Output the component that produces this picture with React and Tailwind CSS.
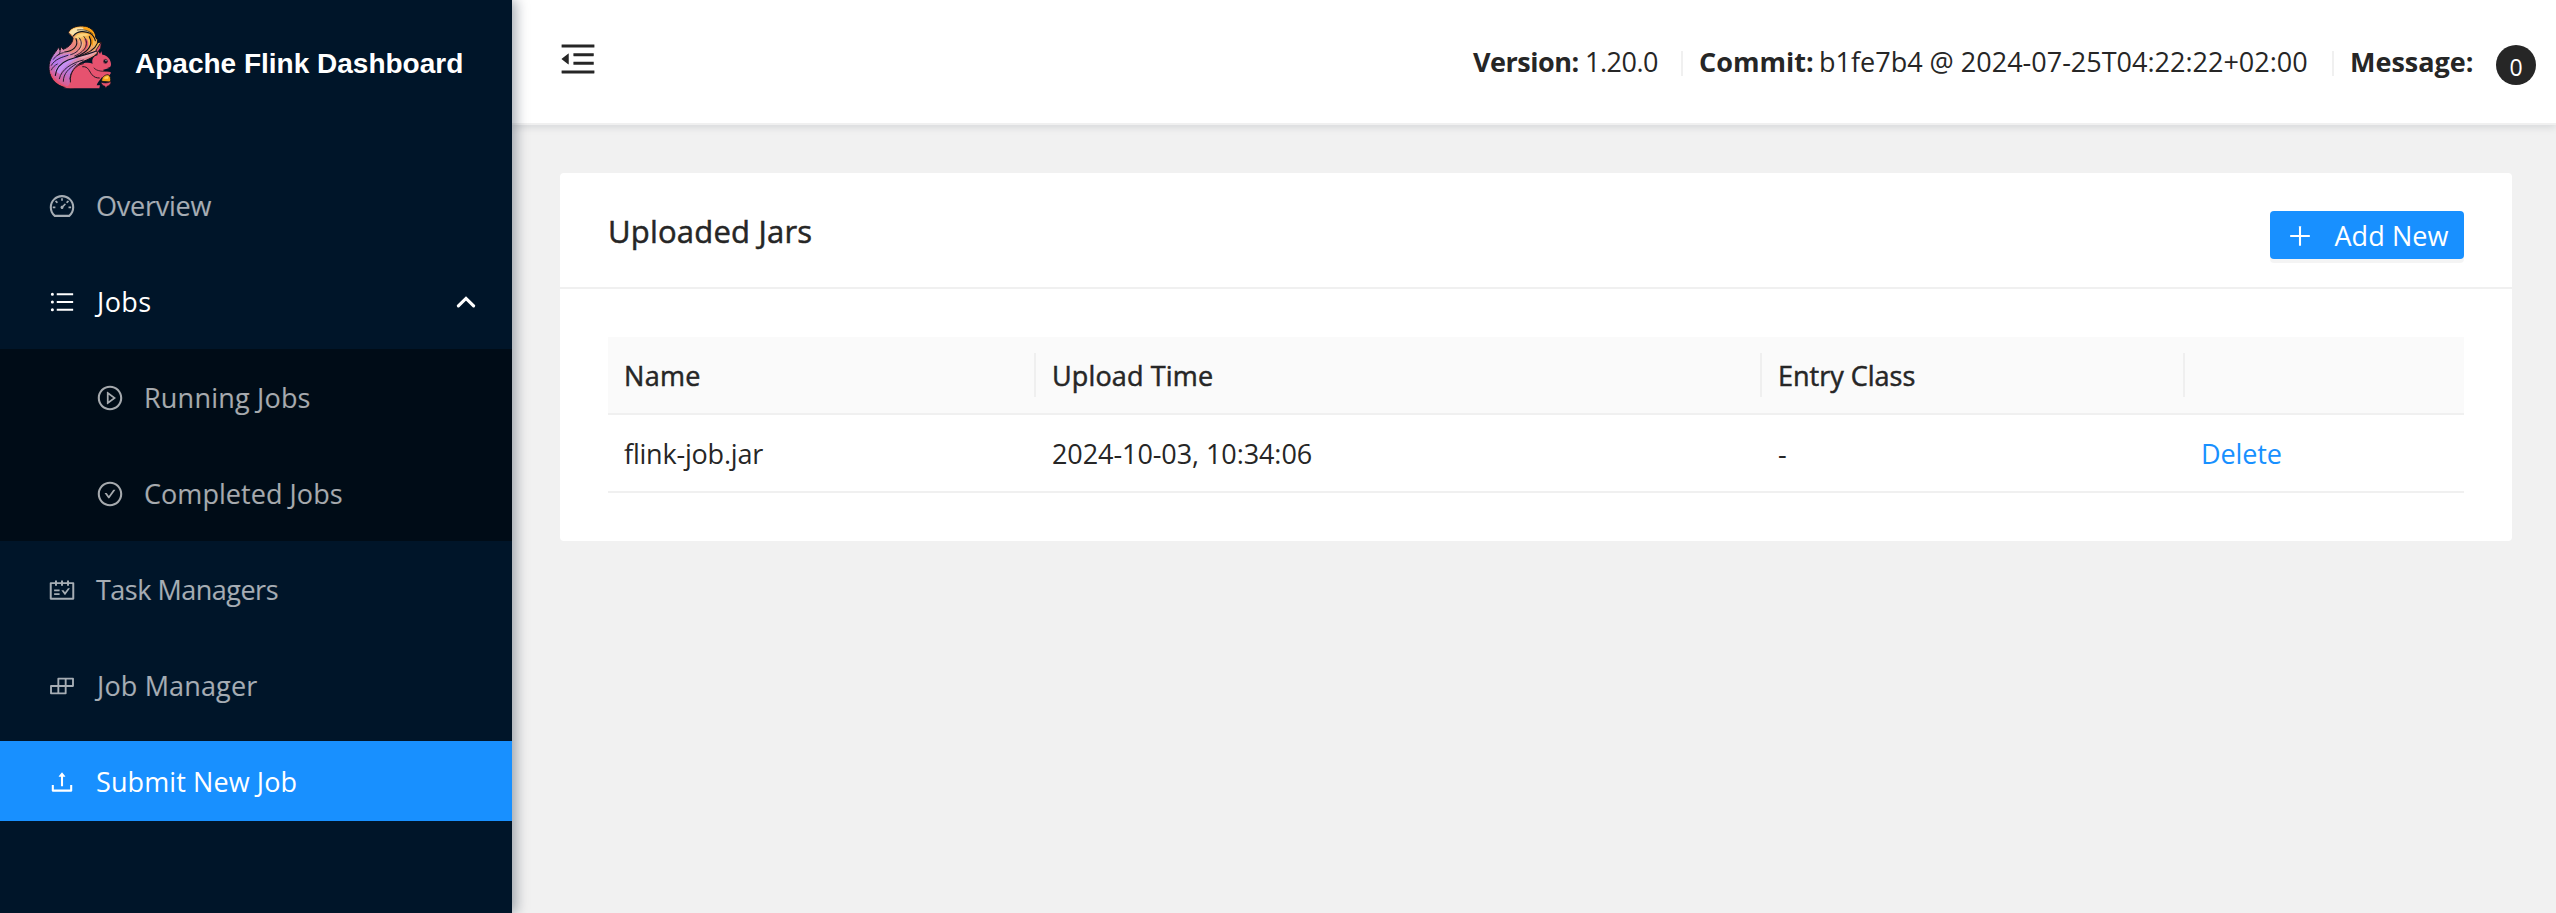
import React from "react";
import {
  AiOutlineDashboard,
  AiOutlineUnorderedList,
  AiOutlinePlayCircle,
  AiOutlineCheckCircle,
  AiOutlineSchedule,
  AiOutlineBuild,
  AiOutlineUpload,
  AiOutlineMenuFold,
  AiOutlinePlus,
} from "react-icons/ai";

function SquirrelLogo() {
  return (
    <svg viewBox="24 12 192 198" className="h-[66px] w-[64px]" aria-hidden="true">
      <defs>
        <linearGradient id="tail" x1="0.75" y1="0" x2="0.2" y2="1">
          <stop offset="0" stopColor="#f9a11b" />
          <stop offset="0.18" stopColor="#f8b95c" />
          <stop offset="0.36" stopColor="#ea7f7f" />
          <stop offset="0.52" stopColor="#d98bb0" />
          <stop offset="0.7" stopColor="#b77be6" />
          <stop offset="1" stopColor="#e6526f" />
        </linearGradient>
      </defs>
      {/* tail silhouette */}
      <path
        d="M100 205C56 205 27 178 27 142C27 116 42 104 56 82L60 90L64 80L69 88C82 84 98 72 99 55C98 48 90 46 85 38C90 24 108 17 128 18C150 19 168 34 167 52L173 60L172 68L184 66C180 78 172 84 178 88C174 104 158 112 140 120C112 130 92 150 90 176Z"
        fill="url(#tail)" stroke="#11131c" strokeWidth="3" strokeLinejoin="round"
      />
      {/* light upper tip */}
      <path d="M88 38C95 25 115 20 130 24C142 27 148 32 150 40C135 34 112 32 100 48C98 43 92 42 88 38Z" fill="#fbe3a8" />
      <path d="M130 21C150 21 163 34 164 50C156 42 150 34 130 28Z" fill="#fba112" />
      <path d="M104 52C116 38 138 38 150 46C142 46 126 48 116 58Z" fill="#fcd37a" />
      <path d="M152 44C160 52 160 66 158 78L150 70C152 60 150 52 146 48Z" fill="#f6930f" />
      {/* middle strands */}
      <path d="M72 94C96 88 108 72 108 56C120 62 118 84 98 98Z" fill="#e98a7c" />
      <path d="M122 60C136 72 128 90 112 98C124 88 124 74 116 64Z" fill="#f3b09a" />
      <path d="M140 56C150 70 144 86 130 94C138 80 138 68 132 58Z" fill="#e2556f" />
      <path d="M110 110C134 106 158 92 176 88C168 104 148 110 128 116Z" fill="#e9a3b2" />
      {/* purple strands */}
      <path d="M34 130C42 112 62 104 96 102C82 110 60 116 46 140Z" fill="#b679ea" />
      <path d="M44 152C56 128 82 116 118 112C92 124 72 138 60 162Z" fill="#c48ff0" />
      <path d="M30 150C36 168 50 186 78 198L98 203C56 204 32 180 30 150Z" fill="#e6526f" />
      <g fill="none" stroke="#11131c" strokeWidth="3.4" strokeLinecap="round">
        <path d="M100 48C112 32 134 32 150 40C160 46 164 54 166 62" />
        <path d="M112 30C130 27 148 32 158 42" strokeWidth="2" />
        <path d="M108 56C118 80 96 94 74 96" />
        <path d="M118 54C134 74 116 98 92 104" strokeWidth="2.6" />
        <path d="M132 50C150 72 134 96 104 108" strokeWidth="2.6" />
        <path d="M148 50C162 76 142 98 108 110" />
        <path d="M172 70C166 86 146 100 112 110" />
        <path d="M178 88C158 102 112 108 84 120C60 130 48 148 46 166" />
        <path d="M34 136C46 116 66 112 84 106" strokeWidth="2.6" />
        <path d="M40 118C48 106 60 100 70 98" strokeWidth="2.4" />
        <path d="M130 120C96 128 64 148 58 176" strokeWidth="2.6" />
        <path d="M108 132C86 146 70 160 70 184" strokeWidth="2.6" />
        <path d="M34 150C38 142 44 136 52 132" strokeWidth="2.4" />
        <path d="M60 88C62 98 58 102 54 106" strokeWidth="2.4" />
      </g>
      {/* body */}
      <path
        d="M66 204C80 204 92 196 91 176C91 152 106 134 130 130C140 128 150 128 158 131C154 120 160 108 172 106L175 94L180 102L184 94L187 104C202 104 213 120 213 132C213 142 206 146 198 147L188 150C194 156 206 152 213 158C208 170 194 176 186 172C180 180 172 188 170 196L180 196L178 205L88 205Z"
        fill="#e6526f"
      />
      <g fill="none" stroke="#11131c" strokeLinecap="round" strokeWidth="2.8">
        <path d="M91 186C88 156 108 134 130 131" />
        <path d="M128 140C146 138 148 156 156 164C162 172 170 174 178 174" />
        <path d="M162 144C170 154 190 156 210 152" strokeWidth="2.2" />
        <path d="M204 144L211 142" strokeWidth="2" />
      </g>
      <path d="M168 90L184 66L182 84L172 98Z" fill="#e6526f" stroke="#11131c" strokeWidth="2.4" />
      <ellipse cx="196" cy="124" rx="7" ry="8" fill="#8d3d55" />
      <circle cx="197" cy="124" r="5.5" fill="#11131c" />
      <circle cx="198" cy="122" r="1.8" fill="#dfe6ea" />
      {/* acorn */}
      <path d="M185 184C184 172 194 164 204 164C212 166 213 178 211 186Z" fill="#f7a21b" stroke="#11131c" strokeWidth="2.4" />
      <path d="M192 176C195 170 200 168 206 169L204 176Z" fill="#fcd25c" />
      <path d="M183 186C192 190 204 190 213 184C213 194 206 198 201 199L197 205L195 199C188 197 184 192 183 186Z" fill="#e6526f" stroke="#11131c" strokeWidth="2" />
    </svg>
  );
}

function NavItem({ icon: Icon, label, tracking = "", active = false, highlighted = false, nested = false, children }) {
  const tone = active || highlighted ? "text-white" : "text-white/65";
  return (
    <a
      className={`my-2 flex h-20 items-center pt-0.5 ${nested ? "pl-24" : "pl-12"} pr-9 ${tone} ${active ? "bg-[#1890ff]" : ""}`}
    >
      <Icon className="size-7 shrink-0" />
      <span className={`mb-px ml-5 leading-[39px] whitespace-nowrap ${tracking}`}>{label}</span>
      {children}
    </a>
  );
}

function Sidebar() {
  return (
    <aside className="relative z-10 flex w-[512px] shrink-0 flex-col bg-[#001529] shadow-[4px_0_12px_rgba(0,21,41,0.35)]">
      <div className="flex h-32 items-center pl-12">
        <div className="mb-[14px]">
          <SquirrelLogo />
        </div>
        <h1 className="ml-[23px] font-['Liberation_Sans',Arial,sans-serif] text-[28px] font-bold whitespace-nowrap text-white">
          Apache Flink Dashboard
        </h1>
      </div>
      <nav className="flex flex-col pt-[29px]">
        <NavItem icon={AiOutlineDashboard} label="Overview" tracking="tracking-[-0.25px]" />
        <NavItem icon={AiOutlineUnorderedList} label="Jobs" tracking="tracking-[0.4px] pl-px" highlighted>
          <svg viewBox="0 0 20 14" className="mr-0 mb-px ml-auto h-[14px] w-5" fill="none" stroke="currentColor" strokeWidth="3.2">
            <path d="M2.4 10.8L10 3.4L17.6 10.8" strokeLinecap="round" />
          </svg>
        </NavItem>
        <div className="flex flex-col bg-[#000c17] py-px">
          <div className="-my-px flex flex-col">
            <NavItem nested icon={AiOutlinePlayCircle} label="Running Jobs" tracking="tracking-[0.2px]" />
            <NavItem nested icon={AiOutlineCheckCircle} label="Completed Jobs" tracking="tracking-[0.05px]" />
          </div>
        </div>
        <NavItem icon={AiOutlineSchedule} label="Task Managers" tracking="tracking-[-0.5px]" />
        <NavItem icon={AiOutlineBuild} label="Job Manager" tracking="tracking-[0.15px] pl-px" />
        <NavItem icon={AiOutlineUpload} label="Submit New Job" tracking="tracking-[0.1px]" active />
      </nav>
    </aside>
  );
}

function Separator() {
  return <span className="mt-1 mr-4 h-[25px] w-0.5 bg-[#f0f0f0]" />;
}

function Header() {
  return (
    <header className="flex h-[125px] items-center border-b-2 border-[#f0f0f0] bg-white pr-5 pl-[45px] shadow-[0_2px_8px_rgba(0,21,41,0.12)]">
      <AiOutlineMenuFold className="mb-[5px] size-[42px]" />
      <div className="ml-auto flex items-center leading-10 whitespace-nowrap">
        <strong className="w-28 font-bold tracking-[-0.5px]">Version:</strong>
        <span className="w-24 tracking-[-0.5px]">1.20.0</span>
        <Separator />
        <strong className="w-[120px] font-bold">Commit:</strong>
        <span className="w-[513px]">b1fe7b4 @ 2024-07-25T04:22:22+02:00</span>
        <Separator />
        <strong className="w-[146px] font-bold">Message:</strong>
        <span className="mt-[7px] flex size-10 items-center justify-center rounded-full bg-[#262626] pt-[3px] text-[23px] text-white">
          0
        </span>
      </div>
    </header>
  );
}

const columns = [
  { title: "Name", tracking: "tracking-[0.3px]", divided: true },
  { title: "Upload Time", tracking: "tracking-[0.15px]", divided: true },
  { title: "Entry Class", tracking: "", divided: true },
  { title: "", tracking: "", divided: false },
];

function JarTable() {
  return (
    <div className="grid grid-cols-[428px_726px_423px_279px] leading-10">
      {columns.map((column, i) => (
        <div key={i} className="flex h-[78px] items-center border-b-2 border-[#f0f0f0] bg-[#fafafa] pl-4">
          <span className={`pt-px font-medium [-webkit-text-stroke:0.5px_#262626] ${column.tracking}`}>{column.title}</span>
          {column.divided && <span className="ml-auto h-11 w-0.5 bg-[#efefef]" />}
        </div>
      ))}
      <div className="flex h-[78px] items-center border-b-2 border-[#f0f0f0] pt-px pl-4 tracking-[-0.2px]">flink-job.jar</div>
      <div className="flex h-[78px] items-center border-b-2 border-[#f0f0f0] pt-px pl-4 tracking-[-0.08px]">2024-10-03, 10:34:06</div>
      <div className="flex h-[78px] items-center border-b-2 border-[#f0f0f0] pt-px pl-4">-</div>
      <div className="flex h-[78px] items-center border-b-2 border-[#f0f0f0] pt-px pl-4 tracking-[-0.1px] text-[#1890ff]">Delete</div>
    </div>
  );
}

export default function App() {
  return (
    <div className="flex h-screen overflow-hidden bg-[#f1f1f1] font-['Open_Sans','Noto_Sans',sans-serif] text-[27px] text-[#262626]">
      <Sidebar />
      <div className="flex min-w-0 flex-1 flex-col">
        <Header />
        <main className="px-12 pt-12 pr-11">
          <section className="rounded-[4px] bg-white">
            <div className="flex h-[116px] items-center justify-between border-b-2 border-[#f0f0f0] px-12 pt-0.5">
              <h2 className="text-[31px] leading-[42px] font-medium tracking-[0.2px] [-webkit-text-stroke:0.5px_#262626]">Uploaded Jars</h2>
              <button className="mt-2 flex h-12 items-center rounded-[4px] bg-[#1890ff] pr-[15px] pl-4 text-white shadow-[0_4px_0_rgba(0,0,0,0.045)]">
                <AiOutlinePlus className="mt-0.5 size-7" />
                <span className="ml-[20px] w-[115px] pt-px leading-10 tracking-[0.1px] whitespace-nowrap">Add New</span>
              </button>
            </div>
            <div className="p-12">
              <JarTable />
            </div>
          </section>
        </main>
      </div>
    </div>
  );
}
